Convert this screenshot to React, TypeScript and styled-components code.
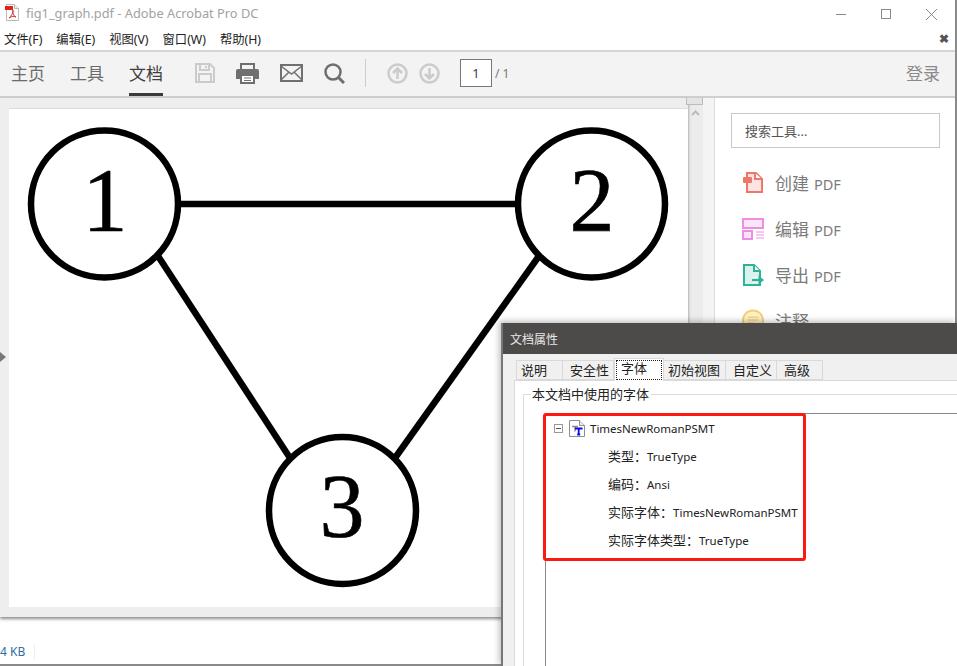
import styled, { createGlobalStyle } from "styled-components";

const GlobalStyle = createGlobalStyle`
  html, body {
    margin: 0;
    padding: 0;
    width: 957px;
    height: 666px;
    overflow: hidden;
    background: #fff;
  }
  * {
    box-sizing: border-box;
  }
  #root {
    height: 666px;
  }
`;

const uiFont = `"Noto Sans", "Noto Sans CJK SC", sans-serif`;

const Screen = styled.div`
  position: relative;
  width: 957px;
  height: 666px;
  overflow: hidden;
  font-family: ${uiFont};
  background: #fff;
`;

const Window = styled.div`
  width: 957px;
  height: 666px;
  display: flex;
  flex-direction: column;
  border-right: 2px solid #8a8a8a;
`;

const TitleBar = styled.div`
  height: 25px;
  display: flex;
  align-items: center;
  padding-left: 5px;
  flex-shrink: 0;
`;

const TitleText = styled.span`
  margin-left: 6px;
  font-size: 12.8px;
  color: #a2a2a2;
`;

const WindowButtons = styled.div`
  margin-left: auto;
  display: flex;
  align-items: center;
  gap: 35px;
  padding-right: 18px;
  padding-top: 3px;
`;

const MenuBar = styled.div`
  height: 25px;
  display: flex;
  align-items: center;
  flex-shrink: 0;
  padding: 2px 6px 0 4px;
  gap: 14px;
`;

const MenuItem = styled.span`
  font-size: 12.3px;
  color: #222;
`;

const MenuClose = styled.span`
  margin-left: auto;
  font-size: 12px;
  font-weight: 700;
  color: #555;
`;

const Toolbar = styled.div`
  height: 48px;
  flex-shrink: 0;
  display: flex;
  align-items: center;
  background: #f3f3f3;
  border-top: 2px solid #d4d4d4;
  border-bottom: 2px solid #cfcfcf;
  padding-left: 11px;
`;

const TabLink = styled.span<{ $active?: boolean }>`
  position: relative;
  height: 44px;
  display: flex;
  align-items: center;
  padding-bottom: 4px;
  margin-right: 25px;
  font-size: 17px;
  color: ${(p) => (p.$active ? "#3f3f3f" : "#6b6b6b")};

  &::after {
    content: "";
    display: ${(p) => (p.$active ? "block" : "none")};
    position: absolute;
    left: 0;
    right: 0;
    bottom: 0;
    height: 3px;
    background: #3a3a3a;
  }
`;

const ToolIcons = styled.div`
  display: flex;
  align-items: center;
  gap: 21px;
  margin-left: 7px;
  margin-bottom: 2px;
`;

const ToolDivider = styled.div`
  width: 1px;
  height: 28px;
  background: #cdcdcd;
  margin: 0 21px 2px 20px;
`;

const PagerIcons = styled.div`
  display: flex;
  gap: 11px;
  margin-bottom: 2px;
`;

const PageInput = styled.div`
  width: 32px;
  height: 28px;
  margin-left: 20px;
  margin-bottom: 2px;
  background: #fff;
  border: 1px solid #777;
  display: flex;
  align-items: center;
  justify-content: center;
  font-size: 12px;
  color: #333;
`;

const PageTotal = styled.span`
  margin-left: 3px;
  margin-bottom: 2px;
  font-size: 12px;
  color: #777;
`;

const SignIn = styled.span`
  margin-left: auto;
  margin-right: 15px;
  margin-bottom: 4px;
  font-size: 17px;
  color: #8a8a8a;
`;

const Workspace = styled.div`
  height: 519px;
  flex-shrink: 0;
  display: flex;
`;

const DocPane = styled.div`
  position: relative;
  width: 688px;
  background: #eee;
  padding: 10px 0 10px 9px;
  box-shadow: 0 2px 3px rgba(0, 0, 0, 0.45);
`;

const PageSheet = styled.div`
  width: 679px;
  height: 499px;
  background: #fff;
  border-top: 1px solid #dcdcdc;
`;

const PaneHandle = styled.div`
  position: absolute;
  left: 0;
  top: 254px;
  width: 0;
  height: 0;
  border-top: 5px solid transparent;
  border-bottom: 5px solid transparent;
  border-left: 6px solid #777;
`;

const ScrollTrack = styled.div`
  width: 15px;
  background: #ececec;
  display: flex;
  flex-direction: column;
  align-items: center;
`;

const ScrollThumb = styled.div`
  width: 17px;
  height: 7px;
  margin-left: -2px;
  background: #e4e4e4;
  border: 1px solid #bbb;
  border-top: none;
  position: relative;
  z-index: 1;
`;

const Splitter = styled.div`
  width: 12px;
  background: #f4f4f4;
  border-right: 1px solid #dcdcdc;
`;

const SidePanel = styled.div`
  flex: 1;
  background: #fff;
  padding: 15px 15px 0 16px;
`;

const SearchBox = styled.div`
  height: 35px;
  border: 1px solid #c8c8c8;
  display: flex;
  align-items: center;
  padding-left: 13px;
  font-size: 13px;
  color: #555;
`;

const ToolList = styled.div`
  display: flex;
  flex-direction: column;
  gap: 23px;
  margin-top: 23px;
  padding-left: 11px;
`;

const ToolRow = styled.div`
  height: 23px;
  display: flex;
  align-items: center;
  gap: 11px;
  font-size: 17px;
  color: #7b7b7b;
`;

const IconSlot = styled.span`
  width: 22px;
  height: 22px;
  display: flex;
  align-items: center;
  justify-content: center;
`;

const ToolLabelLatin = styled.span`
  font-size: 14.5px;
  margin-left: 5px;
`;

const StatusBar = styled.div`
  flex: 1;
  display: flex;
  align-items: flex-start;
  padding-top: 27px;
  font-size: 12px;
  color: #2f6da3;
  border-bottom: 2px solid #8a8a8a;
`;

const StatusSize = styled.span`
  padding-right: 9px;
  line-height: 15px;
  border-right: 1px solid #eee;
`;

const Dialog = styled.div`
  position: absolute;
  left: 501px;
  top: 323px;
  width: 456px;
  height: 343px;
  background: #f0f0f0;
  border-left: 2px solid #777;
  box-shadow: -2px -2px 6px rgba(0, 0, 0, 0.25);
  display: flex;
  flex-direction: column;
`;

const DialogTitle = styled.div`
  height: 31px;
  flex-shrink: 0;
  background: #4d4b49;
  color: #e8e8e8;
  font-size: 12px;
  display: flex;
  align-items: center;
  padding-left: 7px;
`;

const DialogBody = styled.div`
  flex: 1;
  padding: 6px 0 0 11px;
  background: #f0f0f0;
`;

const TabStrip = styled.div`
  display: flex;
  height: 20px;
  padding-left: 2px;
  align-items: flex-end;
`;

const PropTab = styled.div<{ $active?: boolean; $w: number; $pad: number }>`
  position: relative;
  width: ${(p) => p.$w}px;
  height: ${(p) => (p.$active ? 23 : 20)}px;
  margin-bottom: ${(p) => (p.$active ? -1 : 0)}px;
  z-index: ${(p) => (p.$active ? 1 : 0)};
  background: ${(p) => (p.$active ? "#fff" : "#f0f0f0")};
  border: 1px solid #d9d9d9;
  border-left-width: ${(p) => (p.$active ? 1 : 0)}px;
  border-bottom-width: ${(p) => (p.$active ? 0 : 1)}px;
  font-size: 13px;
  color: #222;
  padding-left: ${(p) => p.$pad}px;
  line-height: 18px;

  &:first-child {
    border-left-width: 1px;
  }
`;

const TabFocus = styled.span`
  position: absolute;
  left: 1px;
  right: 1px;
  top: 1px;
  bottom: 1px;
  border: 1px dotted #222;
  pointer-events: none;
`;

const TabPanel = styled.div`
  height: 300px;
  background: #fff;
  border: 1px solid #d9d9d9;
  border-right: none;
  border-bottom: none;
  padding: 13px 0 0 8px;
`;

const GroupBox = styled.div`
  position: relative;
  height: 290px;
  border: 1px solid #dcdcdc;
  border-right: none;
  border-bottom: none;
  padding: 18px 0 0 21px;
`;

const GroupLegend = styled.span`
  position: absolute;
  left: 7px;
  top: -8px;
  background: #fff;
  padding: 0 2px 0 1px;
  font-size: 13px;
  line-height: 15px;
  color: #222;
`;

const FontTree = styled.div`
  height: 260px;
  border: 1px solid #888;
  border-right: none;
  border-bottom: none;
  padding: 6px 0 0 8px;
  font-size: 11.5px;
  color: #222;
`;

const TreeRoot = styled.div`
  height: 16px;
  display: flex;
  align-items: center;
  gap: 5px;
`;

const Expander = styled.span`
  width: 9px;
  height: 9px;
  margin-right: 1px;
  border: 1px solid #999;
  display: flex;
  align-items: center;
  justify-content: center;

  &::after {
    content: "";
    width: 5px;
    height: 1px;
    background: #555;
  }
`;

const TreeLeaf = styled.div`
  height: 16px;
  margin-top: 12px;
  padding-left: 54px;
  line-height: 16px;
  white-space: nowrap;
`;

const LeafKey = styled.span`
  font-size: 13px;
`;

const RedOutline = styled.div`
  position: absolute;
  left: 40px;
  top: 90px;
  width: 263px;
  height: 148px;
  border: 3px solid #fb1a12;
  border-radius: 3px;
  pointer-events: none;
`;

const CloseIcon = () => (
  <svg width="11" height="11" viewBox="0 0 11 11">
    <path d="M0 0l11 11M11 0L0 11" stroke="#8a8a8a" strokeWidth="1" fill="none" />
  </svg>
);

const PdfFileIcon = () => (
  <svg width="15" height="17" viewBox="0 0 15 17">
    <path d="M1.5.5h8l4 4v12h-12z" fill="#fff" stroke="#b9b9b9" />
    <path d="M9.5.5v4h4" fill="#eee" stroke="#b9b9b9" />
    <rect x="0" y="2" width="8" height="4" fill="#e2231a" />
    <path d="M8 6c0 4-2 6-4 8 3-2 5-2 7-1-3-1-3-4-3-7z" fill="none" stroke="#d3302a" strokeWidth="1" />
  </svg>
);

const SaveIcon = () => (
  <svg width="20" height="20" viewBox="0 0 20 20" fill="none" stroke="#cbcbcb" strokeWidth="2">
    <path d="M1 1h14l4 4v14H1z" />
    <path d="M5 1v6h9V1M4 19v-8h12v8" />
    <path d="M11 3v2" />
  </svg>
);

const PrintIcon = () => (
  <svg width="23" height="21" viewBox="0 0 23 21">
    <path d="M5 7V1h13v6" fill="none" stroke="#6f6f6f" strokeWidth="2" />
    <path d="M2 6h19a2 2 0 0 1 2 2v8h-5v-4H5v4H0V8a2 2 0 0 1 2-2z" fill="#6f6f6f" />
    <path d="M5 12h13v8H5z" fill="#fff" stroke="#6f6f6f" strokeWidth="2" />
    <path d="M8 15h7M8 17.5h7" stroke="#6f6f6f" strokeWidth="1" />
  </svg>
);

const MailIcon = () => (
  <svg width="23" height="18" viewBox="0 0 23 18" fill="none" stroke="#707070">
    <rect x="1" y="1" width="21" height="16" strokeWidth="2" />
    <path d="M1 2l10.500 8L22 2M1 16l8-8M22 16l-8-8" strokeWidth="1.500" />
  </svg>
);

const SearchIcon = () => (
  <svg width="21" height="21" viewBox="0 0 21 21" fill="none" stroke="#6f6f6f">
    <circle cx="9" cy="9" r="7.500" strokeWidth="2.500" />
    <path d="M14 14l6 6" strokeWidth="3" />
  </svg>
);

const ArrowCircle = ({ down }: { down?: boolean }) => (
  <svg width="21" height="21" viewBox="0 0 21 21" fill="none" stroke="#cbcbcb" strokeWidth="2.500">
    <circle cx="10.500" cy="10.500" r="9" />
    <path d={down ? "M10.500 5v10M6 11l4.500 4.500L15 11" : "M10.500 16V6M6 10l4.500-4.500L15 10"} />
  </svg>
);

const CreateIcon = () => (
  <svg width="21" height="21" viewBox="0 0 21 21">
    <path d="M4 1h9l6 6v13H4z" fill="#fde3e1" stroke="#f0766b" strokeWidth="2" />
    <path d="M12 1v6h7" fill="#fff" stroke="#f0766b" strokeWidth="2" />
    <rect x="0" y="5" width="9" height="6" rx="1" fill="#f0766b" />
  </svg>
);

const EditIcon = () => (
  <svg width="22" height="22" viewBox="0 0 22 22" stroke="#ee8ee2" fill="#fbe6f8">
    <rect x="1" y="1" width="20" height="9" strokeWidth="2" />
    <rect x="1" y="13" width="9" height="8" strokeWidth="2" />
    <path d="M14 14h8M14 17h8M14 20h8" strokeWidth="1" />
  </svg>
);

const ExportIcon = () => (
  <svg width="21" height="22" viewBox="0 0 21 22">
    <path d="M1 1h10l6 6v14H1z" fill="#d9f2ec" stroke="#2fb297" strokeWidth="2" />
    <path d="M11 1v6h6" fill="#fff" stroke="#2fb297" strokeWidth="2" />
    <path d="M9 16h8" stroke="#fff" strokeWidth="5" />
    <path d="M9 16h7" stroke="#2fb297" strokeWidth="2.500" />
    <path d="M15.500 11.500l5.500 4.500-5.500 4.500z" fill="#2fb297" />
  </svg>
);

const CommentIcon = () => (
  <svg width="23" height="23" viewBox="0 0 23 23">
    <circle cx="11.500" cy="11.500" r="10.500" fill="#fdf1cc" stroke="#f5cf73" strokeWidth="2" />
    <path d="M6 8h11M6 11h11M6 14h7" stroke="#f5cf73" strokeWidth="1.500" />
  </svg>
);

const FontFileIcon = () => (
  <svg width="16" height="17" viewBox="0 0 16 17">
    <path d="M.5.5h10l5 5v11H.5z" fill="#fff" stroke="#8d8d8d" />
    <path d="M10.500.5v5h5" fill="#eee" stroke="#8d8d8d" />
    <path d="M3 6.500h6M6 6.500v5" stroke="#8d8d8d" strokeWidth="1.500" fill="none" />
    <path d="M6 8.500h7.500M9.700 8.500v6M8.200 14.500h3" stroke="#0a0af0" strokeWidth="1.800" fill="none" />
  </svg>
);

const GraphCanvas = () => (
  <svg width="688" height="519" viewBox="0 98 688 519" style={{ position: "absolute", left: 0, top: 0 }}>
    <g stroke="#000" strokeWidth="6.500" fill="none">
      <path d="M180 204H518" />
      <path d="M158 256L290 458" />
      <path d="M539 256L395 458" />
      <circle cx="104.500" cy="204" r="73.500" />
      <circle cx="591.500" cy="204" r="73.500" />
      <circle cx="342.500" cy="510.500" r="73.500" />
    </g>
    <g fontFamily="'Liberation Serif', serif" fontSize="90" fill="#000" stroke="#000" strokeWidth="0.600" textAnchor="middle">
      <text x="105" y="231">1</text>
      <text x="592" y="231">2</text>
      <text x="342" y="537">3</text>
    </g>
  </svg>
);

const tabs = [
  { label: "说明", w: 47, pad: 4 },
  { label: "安全性", w: 51, pad: 7 },
  { label: "字体", w: 50, pad: 6, active: true },
  { label: "初始视图", w: 62, pad: 4 },
  { label: "自定义", w: 51, pad: 7 },
  { label: "高级", w: 46, pad: 7 },
];

const menus = ["文件(F)", "编辑(E)", "视图(V)", "窗口(W)", "帮助(H)"];

export default function App() {
  return (
    <Screen>
      <GlobalStyle />
      <Window>
        <TitleBar>
          <PdfFileIcon />
          <TitleText>fig1_graph.pdf - Adobe Acrobat Pro DC</TitleText>
          <WindowButtons>
            <svg width="10" height="10" viewBox="0 0 10 10">
              <path d="M0 5.500h10" stroke="#8a8a8a" />
            </svg>
            <svg width="10" height="10" viewBox="0 0 10 10">
              <rect x=".5" y=".5" width="9" height="9" fill="none" stroke="#8a8a8a" />
            </svg>
            <CloseIcon />
          </WindowButtons>
        </TitleBar>
        <MenuBar>
          {menus.map((m) => (
            <MenuItem key={m}>{m}</MenuItem>
          ))}
          <MenuClose>✖</MenuClose>
        </MenuBar>
        <Toolbar>
          <TabLink>主页</TabLink>
          <TabLink>工具</TabLink>
          <TabLink $active>文档</TabLink>
          <ToolIcons>
            <SaveIcon />
            <PrintIcon />
            <MailIcon />
            <SearchIcon />
          </ToolIcons>
          <ToolDivider />
          <PagerIcons>
            <ArrowCircle />
            <ArrowCircle down />
          </PagerIcons>
          <PageInput>1</PageInput>
          <PageTotal>/ 1</PageTotal>
          <SignIn>登录</SignIn>
        </Toolbar>
        <Workspace>
          <DocPane>
            <PageSheet />
            <GraphCanvas />
            <PaneHandle />
          </DocPane>
          <ScrollTrack>
            <ScrollThumb />
            <svg width="9" height="6" viewBox="0 0 9 6" style={{ marginTop: 5 }}>
              <path d="M1 5l3.500-3.500L8 5" fill="none" stroke="#bbb" strokeWidth="2" />
            </svg>
          </ScrollTrack>
          <Splitter />
          <SidePanel>
            <SearchBox>搜索工具...</SearchBox>
            <ToolList>
              <ToolRow>
                <IconSlot>
                  <CreateIcon />
                </IconSlot>
                <span>
                  创建<ToolLabelLatin>PDF</ToolLabelLatin>
                </span>
              </ToolRow>
              <ToolRow>
                <IconSlot>
                  <EditIcon />
                </IconSlot>
                <span>
                  编辑<ToolLabelLatin>PDF</ToolLabelLatin>
                </span>
              </ToolRow>
              <ToolRow>
                <IconSlot>
                  <ExportIcon />
                </IconSlot>
                <span>
                  导出<ToolLabelLatin>PDF</ToolLabelLatin>
                </span>
              </ToolRow>
              <ToolRow>
                <IconSlot>
                  <CommentIcon />
                </IconSlot>
                <span>注释</span>
              </ToolRow>
            </ToolList>
          </SidePanel>
        </Workspace>
        <StatusBar>
          <StatusSize>4 KB</StatusSize>
        </StatusBar>
      </Window>
      <Dialog>
        <DialogTitle>文档属性</DialogTitle>
        <DialogBody>
          <TabStrip>
            {tabs.map((t) => (
              <PropTab key={t.label} $w={t.w} $pad={t.pad} $active={t.active}>
                {t.label}
                {t.active && <TabFocus />}
              </PropTab>
            ))}
          </TabStrip>
          <TabPanel>
            <GroupBox>
              <GroupLegend>本文档中使用的字体</GroupLegend>
              <FontTree>
                <TreeRoot>
                  <Expander />
                  <FontFileIcon />
                  <span>TimesNewRomanPSMT</span>
                </TreeRoot>
                <TreeLeaf>
                  <LeafKey>类型：</LeafKey>TrueType
                </TreeLeaf>
                <TreeLeaf>
                  <LeafKey>编码：</LeafKey>Ansi
                </TreeLeaf>
                <TreeLeaf>
                  <LeafKey>实际字体：</LeafKey>TimesNewRomanPSMT
                </TreeLeaf>
                <TreeLeaf>
                  <LeafKey>实际字体类型：</LeafKey>TrueType
                </TreeLeaf>
              </FontTree>
            </GroupBox>
          </TabPanel>
          <RedOutline />
        </DialogBody>
      </Dialog>
    </Screen>
  );
}
